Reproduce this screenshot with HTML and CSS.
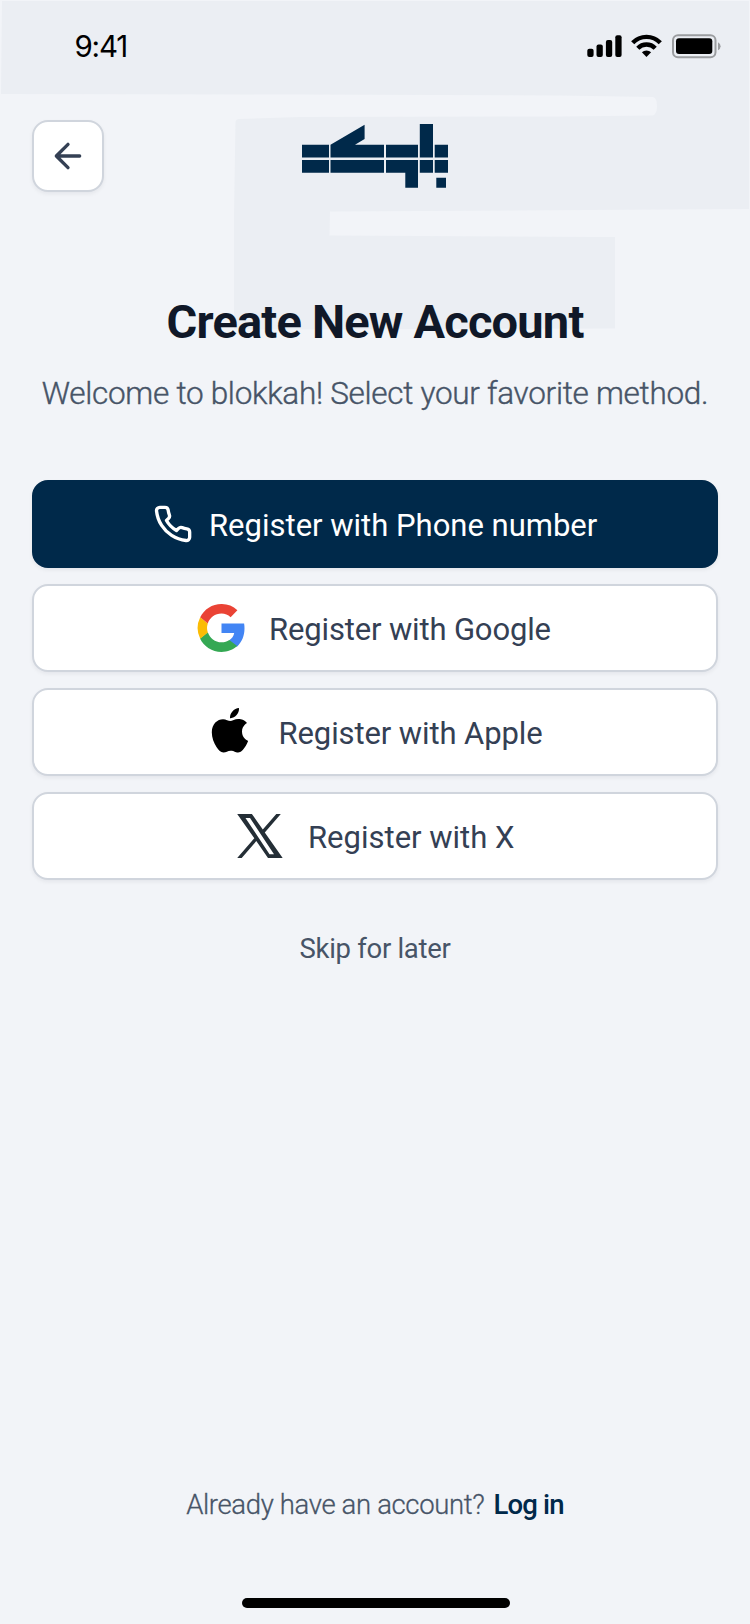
FILE: index.html
```
<!DOCTYPE html>
<html lang="en">
<head>
<meta charset="utf-8">
<title>Create New Account</title>
<link rel="stylesheet" href="styles.css">
</head>
<body>
<main class="screen">
  <svg class="backdrop" width="750" height="340" viewBox="0 0 750 340" aria-hidden="true">
    <path fill="#ebeef3" d="M2 1H749V209L330 211.500L329.500 235.500L594 237H615V328.500L234 329.500V215L235.500 122Q236 119 239 119L300 117L560 116.500L653 115.500Q657 114 657 106Q657 98 653 97L560 95.500L300 94.500L1 94Z"/>
  </svg>
  <header class="status">
    <span class="time">9:41</span>
    <svg class="indicators" width="136" height="26" viewBox="0 0 136 26" aria-label="Signal, Wi-Fi, battery">
      <g fill="#000">
        <rect x="0.300" y="15.700" width="6.300" height="8.300" rx="2"/>
        <rect x="9.500" y="11.500" width="6.300" height="12.500" rx="2"/>
        <rect x="18.900" y="7" width="6.300" height="17" rx="2"/>
        <rect x="28.300" y="2.300" width="6.300" height="21.700" rx="2"/>
      </g>
      <g fill="none" stroke="#000" stroke-width="4.400">
        <path d="M45.700 9.700A19.200 19.200 0 0 1 73.300 9.700"/>
        <path d="M50.800 15.200A12.200 12.200 0 0 1 68.200 15.200"/>
      </g>
      <path d="M59.500 24l-4.600-4.700a6.800 6.800 0 0 1 9.200 0z"/>
      <rect x="86" y="2.300" width="42.500" height="21.900" rx="5" fill="none" stroke="#9b9da0" stroke-width="2"/>
      <rect x="89" y="5.300" width="36.300" height="15.600" rx="3"/>
      <path fill="#9b9da0" d="M131 9.200q2.600 1.300 2.600 4t-2.600 4z"/>
    </svg>
  </header>
  <nav class="topbar">
    <button class="back" aria-label="Back">
      <svg width="40" height="40" viewBox="0 0 24 24" fill="none" stroke="#344054" stroke-width="2" stroke-linecap="round" stroke-linejoin="round"><path d="M19 12H5M12 19l-7-7 7-7"/></svg>
    </button>
    <svg class="logo" width="148" height="66" viewBox="0 0 148 66" aria-label="blokkah">
      <g fill="#00294a">
        <path d="M1 21.700H28V34.600H1zM1 36.900H28V49.800H1z"/>
        <path d="M29.500 21.700L63.600 1.800V16.100L54 21.700H83V34.600H29.500zM29.500 36.900H83V49.800H29.500z"/>
        <path d="M85 21.700H117V34.600H85zM85 36.900H117V64.700H104.300V49.800H85z"/>
        <path d="M118.800 1H132V34.600H118.800zM118.800 36.900H132V49.800H118.800z"/>
        <path d="M133.700 21.700H147V34.600H133.700zM133.700 36.900H147V49.800H133.700zM135.300 54.800H145V64.700H135.300z"/>
      </g>
    </svg>
  </nav>
  <section class="intro">
    <h1 class="title">Create New Account</h1>
    <p class="subtitle">Welcome to blokkah! Select your favorite method.</p>
  </section>
  <section class="methods">
    <button class="method primary">
      <svg width="40" height="40" viewBox="0 0 24 24" fill="none" stroke="#fff" stroke-width="2" stroke-linecap="round" stroke-linejoin="round"><path d="M22 16.920v3a2 2 0 0 1-2.180 2 19.790 19.790 0 0 1-8.630-3.070 19.500 19.500 0 0 1-6-6 19.790 19.790 0 0 1-3.070-8.670A2 2 0 0 1 4.110 2h3a2 2 0 0 1 2 1.720 12.840 12.840 0 0 0 .7 2.810 2 2 0 0 1-.45 2.110L8.090 9.910a16 16 0 0 0 6 6l1.270-1.270a2 2 0 0 1 2.110-.45 12.840 12.840 0 0 0 2.810.7A2 2 0 0 1 22 16.920z"/></svg>
      <span class="label phone">Register with Phone number</span>
    </button>
    <button class="method">
      <svg width="48" height="48" viewBox="0 0 48 48">
        <path fill="#4285f4" d="M47.500 24.500c0-1.700-.1-3.400-.4-4.900H24.500v9.400h12.700c-.6 3-2.300 5.600-4.900 7.300v6.100h7.900c4.600-4.200 7.300-10.500 7.300-17.900z"/>
        <path fill="#34a853" d="M24.500 48c6.100 0 11.700-2.200 15.700-5.900l-7.900-6.100c-2.200 1.500-4.700 2.300-7.800 2.300-6.400 0-11.800-4.300-13.700-10.100l-7.800 6.300C7 42.500 14.900 48 24.500 48z"/>
        <path fill="#fbbc05" d="M10.800 28.600a14.400 14.400 0 0 1 0-9.200l-7.600-6.100a24 24 0 0 0 0 21.400z"/>
        <path fill="#ea4335" d="M24.500 9.500c3.600 0 6.500 1.200 9.100 3.700l6.800-7A23 23 0 0 0 24.500 0C15.100 0 7.100 5.400 3.200 13.300l7.600 6.100C12.700 13.600 18.100 9.500 24.500 9.500z"/>
      </svg>
      <span class="label google">Register with Google</span>
    </button>
    <button class="method">
      <svg width="48" height="48" viewBox="0 0 48 48">
        <path transform="translate(0 -1) scale(1 .985)" d="M40 16.300c-.3.200-5 2.900-5 8.700 0 6.800 5.900 9.200 6.100 9.200 0 .2-.9 3.300-3.100 6.400-1.900 2.700-3.900 5.500-6.900 5.500s-3.800-1.800-7.300-1.800c-3.400 0-4.600 1.800-7.400 1.800s-4.700-2.500-6.900-5.600C6.900 36.800 4.800 31.100 4.800 25.700c0-8.700 5.700-13.300 11.200-13.300 3 0 5.400 1.900 7.300 1.900 1.800 0 4.500-2.100 7.900-2.100 1.300 0 5.900.2 8.800 4.100zM29.600 8.200c1.400-1.600 2.400-3.900 2.400-6.200 0-.3 0-.6-.1-.9-2.200.1-4.900 1.500-6.500 3.400-1.300 1.400-2.400 3.700-2.400 6 0 .4.100.7.100.8h.6c2 0 4.500-1.300 5.900-3.100z"/>
      </svg>
      <span class="label apple">Register with Apple</span>
    </button>
    <button class="method">
      <svg width="48" height="48" viewBox="0 0 48 48">
        <path fill="#242e36" fill-rule="evenodd" d="M1.200 2H15.900L26.800 17.600 40.300 2H44.800L28.800 20.500 46.700 46H32L20.300 29.100 5.700 46H1.200L18.300 26.200zM9.500 6L33.500 42.200H38L14 6z"/>
      </svg>
      <span class="label x">Register with X</span>
    </button>
  </section>
  <a class="skip">Skip for later</a>
  <footer class="footer">
    <p class="login"><span class="question">Already have an account?</span><a class="link">Log in</a></p>
    <div class="home"></div>
  </footer>
</main>
</body>
</html>
```
FILE: styles.css
```
* { box-sizing: border-box; }
body { margin: 0; background: #f2f4f8; font-family: Roboto, "Noto Sans", sans-serif; }
button { font: inherit; padding: 0; cursor: pointer; }
h1, p { margin: 0; }
svg { display: block; flex: none; }

.screen {
  position: relative;
  isolation: isolate;
  display: flex;
  flex-direction: column;
  width: 750px;
  height: 1624px;
  overflow: hidden;
}
.backdrop { position: absolute; inset: 0 auto auto 0; z-index: -1; }

.status {
  display: flex;
  justify-content: space-between;
  height: 120px;
  padding: 33px 27px 0 74.500px;
}
.time { font: 400 29.500px/26px Inter, sans-serif; letter-spacing: -1.200px; }

.topbar {
  display: grid;
  grid-template-columns: 72px 1fr 72px;
  height: 72px;
  padding: 0 32px;
}
.back {
  display: grid;
  place-items: center;
  width: 72px;
  height: 72px;
  border: 2px solid #d0d5dd;
  border-radius: 16px;
  background: #fff;
  box-shadow: 0 2px 4px rgba(16, 24, 40, .06);
}
.logo { margin: 3px auto 0; }

.intro { margin-top: 98px; text-align: center; white-space: nowrap; }
.title { color: #101828; font-size: 47px; font-weight: 700; line-height: 64px; letter-spacing: -.8px; }
.subtitle {
  margin-top: 15px;
  color: #475467;
  font-size: 31.500px;
  line-height: 50px;
  font-weight: 300;
  letter-spacing: -.29px;
  -webkit-text-stroke: .4px;
}

.methods { display: flex; flex-direction: column; gap: 16px; margin-top: 61px; padding: 0 32px; }
.method {
  display: flex;
  align-items: center;
  justify-content: center;
  gap: 24px;
  height: 88px;
  border: 2px solid #d0d5dd;
  border-radius: 16px;
  background: #fff;
  color: #344054;
  font-size: 31px;
  line-height: 48px;
  box-shadow: 0 2px 4px rgba(16, 24, 40, .06);
}
.primary { gap: 16px; border-color: #00294a; background: #00294a; color: #fff; }
.label { padding-top: 3px; white-space: nowrap; text-align: left; }
.phone { width: 388px; }
.google { width: 284px; letter-spacing: -.15px; }
.apple { width: 265px; letter-spacing: -.1px; }
.x { width: 206px; }

.skip { align-self: center; margin-top: 49px; color: #475467; font-size: 27.500px; line-height: 40px; letter-spacing: -.3px; }

.footer { display: flex; flex-direction: column; align-items: center; margin-top: auto; }
.login { display: flex; gap: 9px; color: #475467; font-size: 27.500px; line-height: 40px; letter-spacing: -.35px; white-space: nowrap; }
.question { font-weight: 300; -webkit-text-stroke: .3px; }
.link { color: #00294a; font-weight: 500; letter-spacing: -.8px; }
.home { width: 268px; height: 10px; margin: 73px 0 16px 2px; border-radius: 5px; background: #000; }
```
